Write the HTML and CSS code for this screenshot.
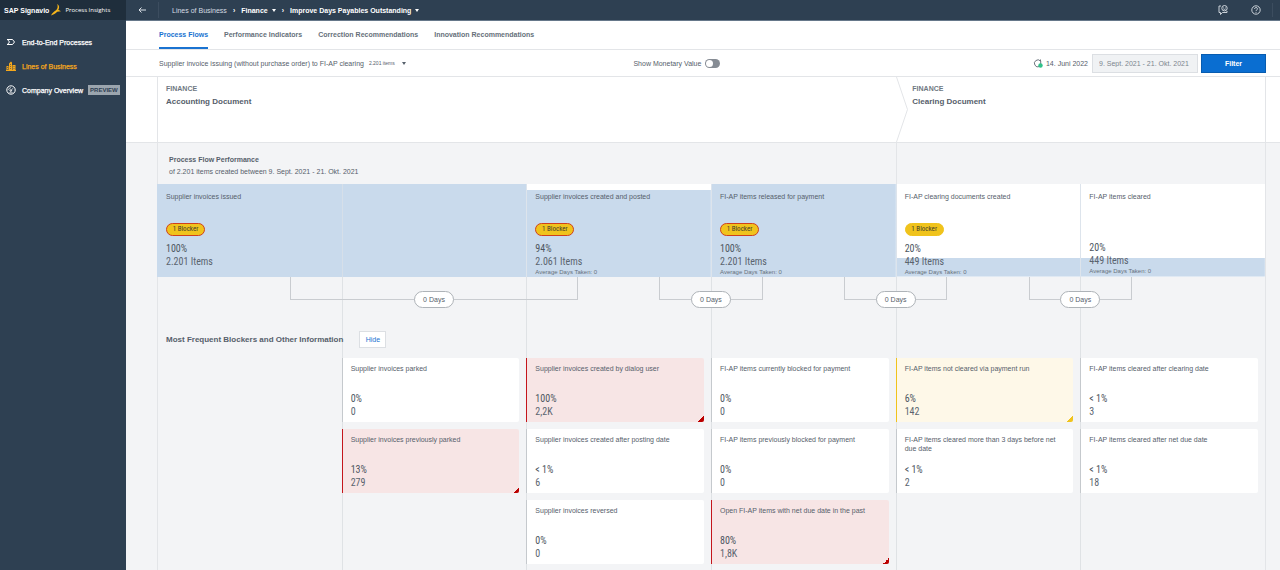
FILE: index.html
```html
<!DOCTYPE html>
<html lang="en">
<head>
<meta charset="utf-8">
<title>SAP Signavio Process Insights</title>
<link rel="stylesheet" href="styles.css">
</head>
<body>
<div class="app">
  <aside class="sidebar">
    <div class="brand">
      <strong class="brand-name">SAP Signavio</strong>
      <svg class="brand-mark" viewBox="0 0 10 12" aria-hidden="true"><path d="M6.200 0C8.600 1.500 8.600 4 7.300 5.700L10 7.200 6.200 7.700C4.500 9.500 2.500 10.400 0 11.600 1.200 9 3 7.600 5 6.300 6.800 4.800 7 2.300 6.200 0Z" fill="#f5b51b"/></svg>
      <span class="brand-product">Process Insights</span>
    </div>
    <nav class="side-nav">
      <a class="side-link" href="#">
        <svg class="side-icon" viewBox="0 0 10 10"><path d="M1 2.500h5.500L8.500 5 6.500 7.500H1M1.500 2.500 3.500 5 1.500 7.500" fill="none" stroke="currentColor" stroke-width="1"/></svg>
        End-to-End Processes</a>
      <a class="side-link active" href="#">
        <svg class="side-icon" viewBox="0 0 10 10"><path d="M0.500 9.500V5h2v4.500M3 9.500V2.500L5 0.500l1 1v8M6.500 9.500V4h3v5.500Z" fill="currentColor"/><path d="M0 9.500h10" stroke="currentColor"/><path d="M4.500 3v6M8 5v4M1.500 6v3" stroke="#2e4052" stroke-width=".6" stroke-dasharray="1 1"/></svg>
        Lines of Business</a>
      <a class="side-link" href="#">
        <svg class="side-icon" viewBox="0 0 10 10" fill="none" stroke="currentColor"><circle cx="5" cy="5" r="4.200"/><circle cx="4.800" cy="5.600" r=".8"/><path d="M5.400 5 7 3.200M2.600 5C2.700 3.500 3.700 2.700 5 2.700M3.200 7.800h3.600" stroke-width=".7"/></svg>
        Company Overview <span class="badge">PREVIEW</span></a>
    </nav>
  </aside>

  <div class="page">
    <header class="topbar">
      <button class="icon-btn back" aria-label="Back"><svg class="arrow" viewBox="0 0 8 6"><path d="M8 3H1M3.500.5 1 3l2.500 2.500" fill="none" stroke="currentColor"/></svg></button>
      <nav class="crumbs">
        <a class="crumb" href="#">Lines of Business</a>
        <span class="sep">›</span>
        <button class="crumb-btn">Finance <i class="caret"></i></button>
        <span class="sep">›</span>
        <button class="crumb-btn">Improve Days Payables Outstanding <i class="caret"></i></button>
      </nav>
      <div class="tools">
        <button class="icon-btn" aria-label="Feedback"><svg class="tool-icon" viewBox="0 0 10 10" fill="none" stroke="currentColor" stroke-width=".9"><path d="M3 1H1v6.500h1.500v2l2-2H9V6"/><circle cx="6.500" cy="3.200" r="2.700"/><path d="M5.300 3.700c.6.900 1.800.9 2.400 0M5.500 2.300h.5M7 2.300h.5"/></svg></button>
        <button class="icon-btn" aria-label="Help"><svg class="tool-icon" viewBox="0 0 10 10" fill="none" stroke="currentColor" stroke-width=".9"><circle cx="5" cy="5" r="4.200"/><path d="M3.600 4C3.600 2 6.500 2.100 6.500 3.900 6.500 4.900 5 4.900 5 6M5 6.900v.9"/></svg></button>
      </div>
    </header>

    <nav class="tabs">
      <a class="tab current" href="#">Process Flows</a>
      <a class="tab" href="#">Performance Indicators</a>
      <a class="tab" href="#">Correction Recommendations</a>
      <a class="tab" href="#">Innovation Recommendations</a>
    </nav>

    <div class="filters">
      <button class="variant">Supplier invoice issuing (without purchase order) to FI-AP clearing <small class="variant-count">2.201 items</small> <i class="caret"></i></button>
      <div class="filter-controls">
        <label class="toggle">Show Monetary Value <input class="switch" type="checkbox"></label>
        <div class="date-group">
          <svg class="refresh" viewBox="0 0 10 9"><path d="M6.500 7.500A3.500 3.500 0 1 1 7.500 2V.5M7.700 2v3" fill="none" stroke="#5c6670" stroke-width=".9"/><circle cx="7.500" cy="6.500" r="2.200" fill="#30c28a"/></svg>
          <span class="refresh-date">14. Juni 2022</span>
          <input class="range" type="text" value="9. Sept. 2021 - 21. Okt. 2021" aria-label="Date range" readonly>
          <button class="filter-btn">Filter</button>
        </div>
      </div>
    </div>

    <main class="canvas">
      <div class="phases">
        <section class="phase phase-accounting"><p class="phase-area">FINANCE</p><h2 class="phase-name">Accounting Document</h2></section>
        <section class="phase phase-clearing">
          <svg class="chevron" viewBox="0 0 12 65" preserveAspectRatio="none"><path d="M.5 0 11.500 32.500.5 65" fill="none" stroke="#e3e5e8"/></svg>
          <div><p class="phase-area">FINANCE</p><h2 class="phase-name">Clearing Document</h2></div>
        </section>
      </div>

      <div class="board">
        <div class="perf">
          <h3 class="perf-title">Process Flow Performance</h3>
          <p class="perf-sub">of 2.201 items created between 9. Sept. 2021 - 21. Okt. 2021</p>
        </div>

        <div class="columns">
          <div class="guides" aria-hidden="true"><i></i><i></i><i></i><i></i><i></i><i></i></div>

          <div class="flow">
            <article class="step wide full"><h4 class="label">Supplier invoices issued</h4><span class="blocker critical">1 Blocker</span><p class="pct">100%</p><p class="num">2.201 Items</p></article>
            <article class="step most"><h4 class="label">Supplier invoices created and posted</h4><span class="blocker critical">1 Blocker</span><p class="pct">94%</p><p class="num">2.061 Items</p><p class="avg">Average Days Taken: 0</p></article>
            <article class="step full"><h4 class="label">FI-AP items released for payment</h4><span class="blocker critical">1 Blocker</span><p class="pct">100%</p><p class="num">2.201 Items</p><p class="avg">Average Days Taken: 0</p></article>
            <article class="step fifth"><h4 class="label">FI-AP clearing documents created</h4><span class="blocker">1 Blocker</span><p class="pct">20%</p><p class="num">449 Items</p><p class="avg">Average Days Taken: 0</p></article>
            <article class="step fifth"><h4 class="label">FI-AP items cleared</h4><p class="pct">20%</p><p class="num">449 Items</p><p class="avg">Average Days Taken: 0</p></article>
          </div>

          <div class="links">
            <div class="link link-a"><span class="days">0 Days</span></div>
            <div class="link link-b"><span class="days">0 Days</span></div>
            <div class="link link-c"><span class="days">0 Days</span></div>
            <div class="link link-d"><span class="days">0 Days</span></div>
          </div>

          <div class="blockers-head">
            <h3 class="blockers-title">Most Frequent Blockers and Other Information</h3>
            <button class="hide-btn">Hide</button>
          </div>

          <div class="cards">
            <div class="stack first">
              <article class="card"><h4 class="label">Supplier invoices parked</h4><p class="pct">0%</p><p class="num">0</p></article>
              <article class="card error"><h4 class="label">Supplier invoices previously parked</h4><p class="pct">13%</p><p class="num">279</p></article>
            </div>
            <div class="stack">
              <article class="card error"><h4 class="label">Supplier invoices created by dialog user</h4><p class="pct">100%</p><p class="num">2,2K</p></article>
              <article class="card"><h4 class="label">Supplier invoices created after posting date</h4><p class="pct">&lt; 1%</p><p class="num">6</p></article>
              <article class="card"><h4 class="label">Supplier invoices reversed</h4><p class="pct">0%</p><p class="num">0</p></article>
            </div>
            <div class="stack">
              <article class="card"><h4 class="label">FI-AP items currently blocked for payment</h4><p class="pct">0%</p><p class="num">0</p></article>
              <article class="card"><h4 class="label">FI-AP items previously blocked for payment</h4><p class="pct">0%</p><p class="num">0</p></article>
              <article class="card error"><h4 class="label">Open FI-AP items with net due date in the past</h4><p class="pct">80%</p><p class="num">1,8K</p></article>
            </div>
            <div class="stack">
              <article class="card warn"><h4 class="label">FI-AP items not cleared via payment run</h4><p class="pct">6%</p><p class="num">142</p></article>
              <article class="card"><h4 class="label">FI-AP items cleared more than 3 days before net due date</h4><p class="pct">&lt; 1%</p><p class="num">2</p></article>
            </div>
            <div class="stack">
              <article class="card"><h4 class="label">FI-AP items cleared after clearing date</h4><p class="pct">&lt; 1%</p><p class="num">3</p></article>
              <article class="card"><h4 class="label">FI-AP items cleared after net due date</h4><p class="pct">&lt; 1%</p><p class="num">18</p></article>
            </div>
          </div>
        </div>
      </div>
    </main>
  </div>
</div>
</body>
</html>
```
FILE: styles.css
```css
* { box-sizing: border-box; }
body, h2, h3, h4, p { margin: 0; }
body { font: 7px/9px "Liberation Sans", Arial, sans-serif; color: #56606b; }
button { font: inherit; color: inherit; background: none; border: 0; padding: 0; cursor: pointer; }
a { color: inherit; text-decoration: none; }
svg { display: block; flex: none; }

.app { display: flex; min-height: 100vh; background: #f3f4f6; }

/* Sidebar */
.sidebar { flex: none; width: 126px; background: #2e4052; color: #fff; }
.brand { display: flex; align-items: center; height: 20px; padding-left: 4px; background: #1f2e3c; }
.brand-name { font-size: 7px; white-space: nowrap; }
.brand-mark { width: 10px; height: 12px; margin-left: 2px; }
.brand-product { margin-left: 4px; font: 6px/9px "Open Sans", sans-serif; white-space: nowrap; }
.side-nav { display: flex; flex-direction: column; padding-top: 10px; }
.side-link { display: flex; align-items: center; height: 24px; padding-left: 6px; gap: 6px; white-space: nowrap; -webkit-text-stroke: 0.25px; }
.side-link.active { color: #f5a81c; }
.side-icon { width: 10px; height: 10px; }
.badge { display: flex; align-items: center; height: 10px; margin-left: -1px; padding: 0 2px; background: #9ba5ae; color: #2e4052; font: bold 6px/8px "Liberation Sans", sans-serif; -webkit-text-stroke: 0; }

/* Top bar */
.page { flex: 1; min-width: 0; display: flex; flex-direction: column; }
.topbar { display: flex; align-items: center; height: 21px; padding-right: 7px; background: #2e4052; border-bottom: 1px solid #66788a; color: #fff; }
.icon-btn { display: flex; color: #dbe1e7; }
.back { justify-content: center; align-items: center; width: 33px; height: 16px; border-right: 1px solid #3c4d5f; }
.arrow { width: 8px; height: 6px; }
.crumbs { display: flex; align-items: center; gap: 6px; padding-left: 13px; }
.crumb { color: #d5dce3; }
.crumb-btn { display: flex; align-items: center; gap: 4px; font-weight: bold; white-space: nowrap; }
.sep { font-weight: bold; }
.caret { width: 0; height: 0; border: 2px solid transparent; border-top: 3px solid currentColor; border-bottom: 0; }
.tools { display: flex; align-items: center; gap: 23px; margin-left: auto; padding-right: 11px; border-right: 1px solid #3c4d5f; height: 14px; }
.tool-icon { width: 10px; height: 10px; }

/* Tabs */
.tabs { display: flex; gap: 16px; height: 29px; padding: 0 33px; background: #fff; border-bottom: 1px solid #e3e5e8; font-weight: bold; color: #66707a; }
.tab { display: flex; align-items: center; white-space: nowrap; border-bottom: 2px solid transparent; }
.current { color: #1a73d1; border-color: #1a73d1; }

/* Filter row */
.filters { display: grid; grid-template-columns: 3fr 4fr; align-items: center; height: 27px; padding: 0 14px 0 33px; background: #fff; border-bottom: 1px solid #e3e5e8; }
.variant { display: flex; align-items: center; gap: 5px; white-space: nowrap; }
.variant-count { margin-right: 2px; font-size: 5px; }
.filter-controls { display: flex; justify-content: space-between; align-items: center; }
.toggle { display: flex; align-items: center; gap: 4px; }
.switch { appearance: none; display: flex; width: 15px; height: 9px; margin: 0; padding: 1px; border-radius: 5px; background: #868c94; }
.switch::before { content: ""; width: 7px; height: 7px; border-radius: 50%; background: #fff; }
.date-group { display: flex; align-items: center; gap: 3px; }
.refresh { width: 10px; height: 9px; }
.range { width: 106px; height: 19px; margin-left: 1px; padding: 0 6px; border: 1px solid #dcdfe3; background: #f0f2f4; font: inherit; color: #7c858e; }
.filter-btn { width: 65px; height: 19px; background: #0a6ed1; color: #fff; border: 1px solid #075cb0; font-weight: bold; }

/* Phase headers */
.canvas { flex: 1; display: flex; flex-direction: column; }
.phases { display: grid; grid-template-columns: repeat(6, 1fr); height: 66px; padding: 0 14px 0 31px; background: #fff; border-bottom: 1px solid #e3e5e8; }
.phase-accounting { grid-column: span 4; padding-left: 8px; border-left: 1px solid #e3e5e8; }
.phase-clearing { grid-column: span 2; display: flex; gap: 4px; border-right: 1px solid #e3e5e8; }
.chevron { width: 12px; height: 65px; }
.phase-area { padding-top: 7px; font-weight: bold; color: #6f7882; }
.phase-name { padding-top: 4px; font-size: 8px; line-height: 10px; }

/* Board */
.board { flex: 1; display: flex; flex-direction: column; margin: 0 14px 0 31px; border: solid #e3e5e8; border-width: 0 1px; background: linear-gradient(#e3e5e8, #e3e5e8) 66.7% 0 / 1px 100% no-repeat; }
.perf { height: 41px; padding: 12px 11px 0; }
.perf-title { font-size: 7px; line-height: 10px; }
.perf-sub { padding-top: 2px; line-height: 9px; }
.columns { flex: 1; position: relative; margin-left: -1px; padding-bottom: 6px; }
.guides { position: absolute; inset: 0; display: grid; grid-template-columns: repeat(6, 1fr); }
.guides i + i { border-left: 1px solid #dfe2e5; }
.flow, .links, .blockers-head, .cards { position: relative; }

/* Flow steps */
.flow { display: grid; grid-template-columns: repeat(6, 1fr); }
.step { display: flex; flex-direction: column; align-items: flex-start; height: 93px; padding: 8px 8px 0; border-left: 1px solid #dde4ec; background: #fff linear-gradient(#c9daec, #c9daec) bottom / 100% 100% no-repeat; }
.step.most { background-size: 100% 94%; }
.step.fifth { background-size: 100% 20%; }
.step.wide { grid-column: span 2; border-left-color: #c9daec; background: linear-gradient(#d6dfe9, #d6dfe9) 50% 0 / 1px 100% no-repeat, #c9daec; }
.label { font-size: 7px; line-height: 9px; font-weight: normal; }
.step .label { flex: none; height: 31px; }
.blocker { display: flex; align-items: center; justify-content: center; width: 39px; height: 13px; margin-bottom: 6px; border: 1px solid #f0c31c; border-radius: 7px; background: #f0c31c; color: #45402a; font: 7px/9px "Roboto Condensed", Roboto, sans-serif; }
.critical { border-color: #d0401c; }
.step .label + .pct { margin-top: 18px; }
.pct, .num { font: 10px/13px "Roboto Condensed", Roboto, sans-serif; color: #4d5661; }
.num { color: #5a646f; }
.avg { line-height: 8px; font-size: 6px; color: #67717c; }

/* Connectors */
.links { display: grid; grid-template-columns: repeat(6, 1fr); height: 54px; align-items: start; }
.link { grid-row: 1; display: flex; justify-content: center; align-items: flex-end; height: 23px; margin: 0 36%; border: solid #c9ccd0; border-width: 0 1px 1px; }
.link-a { grid-column: 1 / 4; margin: 0 24%; }
.link-b { grid-column: 3 / 5; }
.link-c { grid-column: 4 / 6; }
.link-d { grid-column: 5 / 7; }
.days { flex: none; width: 40px; height: 17px; margin-bottom: -9px; border: 1px solid #aeb3b8; border-radius: 9px; background: #fff; line-height: 15px; text-align: center; }

/* Blocker cards */
.blockers-head { display: flex; align-items: center; gap: 16px; height: 17px; margin-bottom: 10px; padding-left: 9px; }
.blockers-title { font-size: 8px; line-height: 10px; }
.hide-btn { width: 27px; height: 17px; border: 1px solid #dcdfe3; background: #fff; color: #1a73d1; }
.cards { display: grid; grid-template-columns: repeat(6, 1fr); }
.stack { display: flex; flex-direction: column; gap: 7px; padding-right: 7px; }
.first { grid-column: 2; }
.card { height: 64px; padding: 6px 8px 0; border-left: 1px solid #c5c9cd; border-radius: 0 2px 2px 0; background: #fff; }
.card .label { height: 28px; }
.error { border-color: #c4161c; background: linear-gradient(135deg, transparent 50%, #bb0000 50%) right bottom / 6px 6px no-repeat, #f7e5e5; }
.warn { border-color: #f0c31c; background: linear-gradient(135deg, transparent 50%, #f0c31c 50%) right bottom / 6px 6px no-repeat, #fef8e8; }
```
